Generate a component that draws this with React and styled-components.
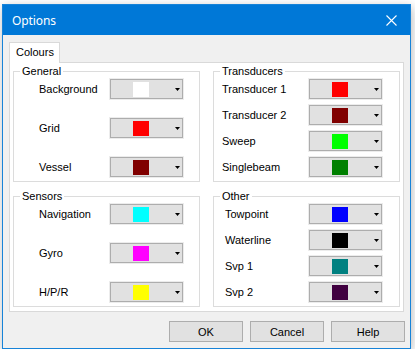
import React from "react";
import styled, { createGlobalStyle } from "styled-components";

const GlobalStyle = createGlobalStyle`
  body {
    margin: 0;
    background: #ffffff;
    font-family: "Liberation Sans", Arial, sans-serif;
  }
`;

const groups = [
  {
    title: "General",
    wide: true,
    rows: [
      { label: "Background", color: "#ffffff" },
      { label: "Grid", color: "#ff0000" },
      { label: "Vessel", color: "#800000" }
    ]
  },
  {
    title: "Transducers",
    indent: 8,
    rows: [
      { label: "Transducer 1", color: "#ff0000" },
      { label: "Transducer 2", color: "#800000" },
      { label: "Sweep", color: "#00ff00" },
      { label: "Singlebeam", color: "#008000" }
    ]
  },
  {
    title: "Sensors",
    wide: true,
    rows: [
      { label: "Navigation", color: "#00ffff" },
      { label: "Gyro", color: "#ff00ff" },
      { label: "H/P/R", color: "#ffff00" }
    ]
  },
  {
    title: "Other",
    indent: 11,
    rows: [
      { label: "Towpoint", color: "#0000ff" },
      { label: "Waterline", color: "#000000" },
      { label: "Svp 1", color: "#008080" },
      { label: "Svp 2", color: "#400040" }
    ]
  }
];

const ColourCombo = ({ color }) => (
  <Combo>
    <Swatch color={color} />
    <Arrow width="5" height="3" viewBox="0 0 5 3">
      <polygon points="0,0 5,0 2.5,3" fill="#000" />
    </Arrow>
  </Combo>
);

const App = () => {
  return (
    <>
      <GlobalStyle />
      <Window>
        <TitleBar>
          <Title>Options</Title>
          <CloseIcon width="11" height="11" viewBox="0 0 11 11">
            <path d="M0.5 0.5 L10.5 10.5 M10.5 0.5 L0.5 10.5" stroke="#fff" strokeWidth="1.1" />
          </CloseIcon>
        </TitleBar>

        <TabStrip>
          <Tab>Colours</Tab>
        </TabStrip>

        <TabPanel>
          {groups.map((g) => (
            <Group key={g.title}>
              <Legend>{g.title}</Legend>
              <Rows wide={g.wide}>
                {g.rows.map((r) => (
                  <Row key={r.label} indent={g.wide ? 25 : g.indent} wide={g.wide}>
                    <Label>{r.label}</Label>
                    <ColourCombo color={r.color} />
                  </Row>
                ))}
              </Rows>
            </Group>
          ))}
        </TabPanel>

        <ButtonBar>
          <Button>OK</Button>
          <Button>Cancel</Button>
          <Button>Help</Button>
        </ButtonBar>
      </Window>
    </>
  );
};

export default App;

const Window = styled.div`
  box-sizing: border-box;
  width: 409px;
  height: 345px;
  margin: 4px 0 0 2px;
  border: 1px solid #1783d8;
  background: #f0f0f0;
  box-shadow: 1px 3px 10px rgba(0, 0, 0, 0.28);
  display: flex;
  flex-direction: column;
`;

const TitleBar = styled.div`
  height: 30px;
  flex: none;
  background: #0078d7;
  display: flex;
  align-items: center;
  justify-content: space-between;
  padding: 0 9px 0 9px;
`;

const Title = styled.span`
  color: #ffffff;
  font-family: "Noto Sans", "Open Sans", sans-serif;
  font-size: 12px;
  letter-spacing: -0.1px;
`;

const CloseIcon = styled.svg`
  display: block;
  margin-right: 4px;
`;

const TabStrip = styled.div`
  display: flex;
  margin: 7px 6px 0 6px;
  position: relative;
  z-index: 1;
`;

const Tab = styled.div`
  box-sizing: border-box;
  height: 21px;
  width: 51px;
  margin-bottom: -1px;
  padding: 3px 0 0 6px;
  background: #ffffff;
  border: 1px solid #d9d9d9;
  border-bottom: none;
  font-size: 11px;
  color: #000;
`;

const TabPanel = styled.div`
  box-sizing: border-box;
  height: 250px;
  margin: 0 6px;
  padding: 1px 3px 4px 3px;
  background: #ffffff;
  border: 1px solid #d9d9d9;
  display: grid;
  grid-template-columns: 187px 187px;
  grid-template-rows: 118px 118px;
  column-gap: 13px;
  row-gap: 7px;
`;

const Group = styled.fieldset`
  box-sizing: border-box;
  margin: 0;
  padding: 0;
  min-width: 0;
  border: 1px solid #dcdcdc;
`;

const Legend = styled.legend`
  margin-left: 6px;
  padding: 0 2px;
  font-size: 11px;
  line-height: 14px;
  color: #000;
`;

const Rows = styled.div`
  display: flex;
  flex-direction: column;
  gap: ${({ wide }) => (wide ? "17px" : "4px")};
`;

const Row = styled.div`
  display: flex;
  align-items: center;
  justify-content: space-between;
  height: 22px;
  padding-left: ${({ indent }) => indent}px;
  padding-right: ${({ wide }) => (wide ? "15px" : "16px")};
`;

const Label = styled.span`
  font-size: 11px;
  color: #000;
`;

const Combo = styled.div`
  box-sizing: border-box;
  width: 73px;
  height: 20px;
  margin: 1px;
  border: 1px solid #adadad;
  box-shadow: 0 0 0 1px #ececec;
  background: #e1e1e1;
  display: flex;
  align-items: center;
  padding: 0 2px 0 22px;
`;

const Swatch = styled.div`
  width: 16px;
  height: 15px;
  background: ${({ color }) => color};
`;

const Arrow = styled.svg`
  display: block;
  margin-left: auto;
  margin-top: 1px;
`;

const ButtonBar = styled.div`
  display: flex;
  justify-content: flex-end;
  gap: 7px;
  margin: 9px 5px 0 0;
`;

const Button = styled.button`
  box-sizing: border-box;
  width: 74px;
  height: 21px;
  margin: 0;
  padding: 0;
  border: 1px solid #adadad;
  background: #e1e1e1;
  font-family: "Liberation Sans", Arial, sans-serif;
  font-size: 11px;
  color: #000;
`;
